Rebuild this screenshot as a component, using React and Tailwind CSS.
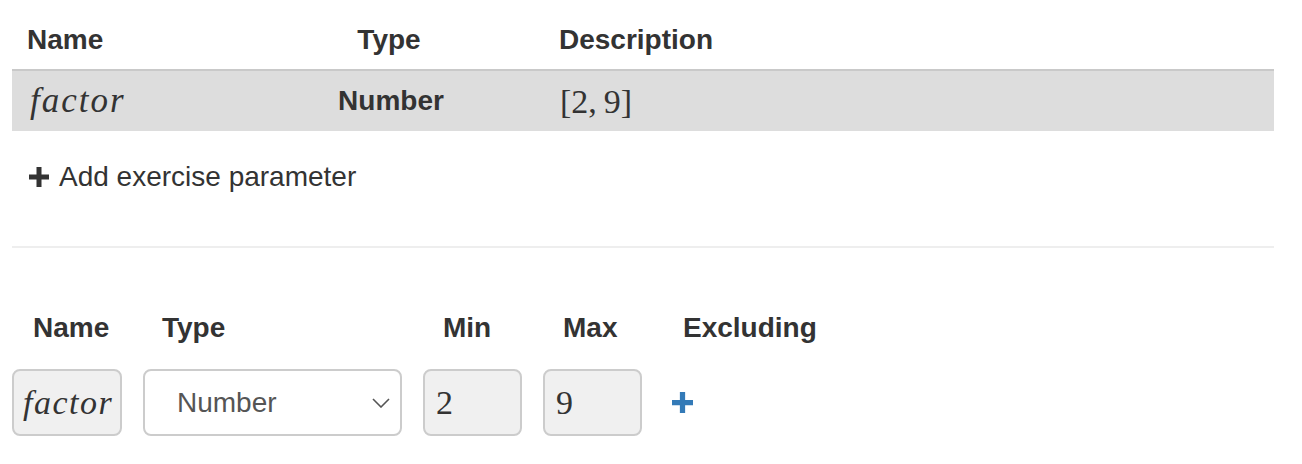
const math = { fontFamily: '"Liberation Serif", "DejaVu Serif", serif' };
const sans = { fontFamily: '"Liberation Sans", Arial, sans-serif' };

const PlusIcon = ({ className }) => (
  <svg viewBox="0 0 20 20" className={className} fill="currentColor">
    <path d="M7.5 0h5v7.5H20v5h-7.5V20h-5v-7.5H0v-5h7.5z" />
  </svg>
);

const MathVar = ({ children, className = "" }) => (
  <span className={"italic " + className} style={math}>
    {children}
  </span>
);

export default function App() {
  return (
    <div className="w-[1302px] h-[464px] bg-white text-[#333] overflow-hidden" style={sans}>
      <div className="mx-[12px] w-[1262px]">
        {/* parameter table */}
        <div className="grid grid-cols-[224px_308px_1fr] h-[69px] pt-[20px] text-[28px] leading-[40px] font-bold">
          <div className="pl-[15px]">Name</div>
          <div className="text-center pr-[2px]">Type</div>
          <div className="pl-[15px]">Description</div>
        </div>
        <div className="h-[2px] bg-[#c9c9c9]" />
        <div className="grid grid-cols-[224px_308px_1fr] h-[60px] items-center bg-[#dddddd] text-[28px]">
          <div className="pl-[18px]">
            <MathVar className="text-[35px] tracking-[2px]">factor</MathVar>
          </div>
          <div className="text-center font-bold pl-[2px]">Number</div>
          <div className="pl-[16px] text-[34px]" style={math}>
            [2,&thinsp;9]
          </div>
        </div>

        <div className="mt-[26px] h-[40px] flex items-center pl-[17px] text-[28px]">
          <PlusIcon className="w-[20px] h-[20px] mr-[10px] text-[#333]" />
          <span>Add exercise parameter</span>
        </div>

        <div className="mt-[49px] h-[2px] bg-[#eeeeee]" />

        {/* parameter editor */}
        <div className="mt-[60px] grid grid-cols-[110px_259px_99px_99px_auto] gap-x-[21px] text-[28px]">
          <div className="h-[40px] leading-[40px] font-bold pl-[21px] whitespace-nowrap">Name</div>
          <div className="h-[40px] leading-[40px] font-bold pl-[19px]">Type</div>
          <div className="h-[40px] leading-[40px] font-bold pl-[20px]">Min</div>
          <div className="h-[40px] leading-[40px] font-bold pl-[20px]">Max</div>
          <div className="h-[40px] leading-[40px] font-bold pl-[20px]">Excluding</div>

          <div className="mt-[21px] h-[67px] rounded-[8px] border-2 border-[#cccccc] bg-[#f0f0f0] flex items-center pl-[9px]">
            <MathVar className="text-[34px] tracking-[1.5px]">factor</MathVar>
          </div>
          <div className="mt-[21px] h-[67px] rounded-[8px] border-2 border-[#cccccc] bg-white flex items-center justify-between pl-[32px] pr-[10px] text-[#555]">
            <span>Number</span>
            <svg viewBox="0 0 18 10" className="w-[18px] h-[10px]" fill="none" stroke="#555" strokeWidth="1.6">
              <path d="M1 1l8 8 8-8" />
            </svg>
          </div>
          <div className="mt-[21px] h-[67px] rounded-[8px] border-2 border-[#cccccc] bg-[#f0f0f0] flex items-center pl-[11px] text-[34px]" style={math}>
            2
          </div>
          <div className="mt-[21px] h-[67px] rounded-[8px] border-2 border-[#cccccc] bg-[#f0f0f0] flex items-center pl-[11px] text-[34px]" style={math}>
            9
          </div>
          <div className="mt-[21px] h-[67px] flex items-center pl-[9px]">
            <PlusIcon className="w-[21px] h-[21px] text-[#337ab7]" />
          </div>
        </div>
      </div>
    </div>
  );
}
